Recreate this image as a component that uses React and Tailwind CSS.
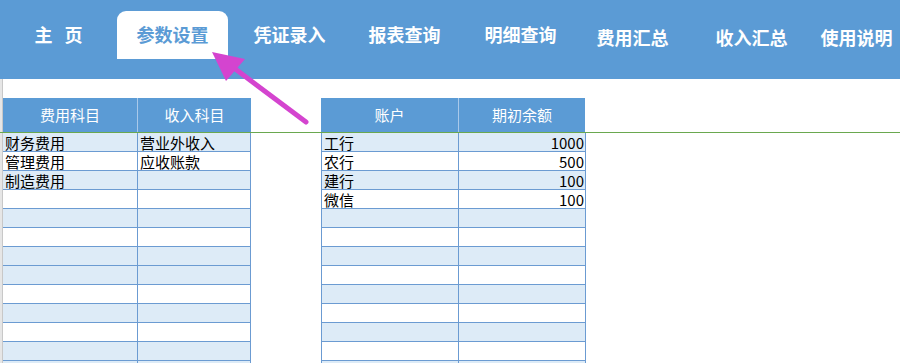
import React from 'react'

const font = { fontFamily: '"Noto Sans CJK SC", "Noto Sans", sans-serif' }

const navItems = [
  { label: '主页', width: 'w-[117px]', spaced: true },
  { label: '参数设置', width: 'w-[111px]', active: true },
  { label: '凭证录入', width: 'w-[123px]' },
  { label: '报表查询', width: 'w-[107px]' },
  { label: '明细查询', width: 'w-[125px]' },
  { label: '费用汇总', width: 'w-[99px]', low: true },
  { label: '收入汇总', width: 'w-[139px]', low: true },
  { label: '使用说明', width: 'w-[71px]', low: true },
]

const expenses = ['财务费用', '管理费用', '制造费用']
const incomes = ['营业外收入', '应收账款']
const accounts = [
  ['工行', '1000'],
  ['农行', '500'],
  ['建行', '100'],
  ['微信', '100'],
]

// left table has a doubled blue stripe lower down, as in the sheet
const leftStripes = [1, 0, 1, 0, 1, 0, 1, 1, 0, 1, 0, 1, 1]

function NavBar() {
  return (
    <div className="flex h-[79px] w-full items-start bg-[#5b9bd5] pt-[11px]">
      {navItems.map((item) => (
        <div
          key={item.label}
          className={
            item.active
              ? `${item.width} flex h-[48px] shrink-0 items-center justify-center rounded-t-[9px] bg-white pb-[2px] text-[18px] font-bold whitespace-nowrap text-[#5b9bd5]`
              : item.low
                ? `${item.width} flex h-[48px] shrink-0 items-center justify-center pt-[4px] text-[18px] font-bold whitespace-nowrap text-white`
                : `${item.width} flex h-[48px] shrink-0 items-center justify-center gap-[12px] pb-[2px] text-[18px] font-bold whitespace-nowrap text-white`
          }
        >
          {item.spaced ? (
            <>
              <span>主</span>
              <span>页</span>
            </>
          ) : (
            item.label
          )}
        </div>
      ))}
    </div>
  )
}

function HeaderRow() {
  return (
    <div className="flex h-[35px] border-b border-[#6aa84f]">
      <div className="w-[3px] shrink-0 border-r border-[#c8c8c8] bg-[#e6e6e6]" />
      <div className="flex w-[135px] shrink-0 items-center justify-center border-r border-[#a9c9ea] bg-[#5b9bd5] text-[15px] text-white">
        费用科目
      </div>
      <div className="flex w-[113px] shrink-0 items-center justify-center bg-[#5b9bd5] text-[15px] text-white">
        收入科目
      </div>
      <div className="w-[70px] shrink-0" />
      <div className="flex w-[138px] shrink-0 items-center justify-center border-r border-[#a9c9ea] bg-[#5b9bd5] text-[15px] text-white">
        账户
      </div>
      <div className="flex w-[126px] shrink-0 items-center justify-center bg-[#5b9bd5] text-[15px] text-white">
        期初余额
      </div>
      <div className="flex-1" />
    </div>
  )
}

function DataRow({ index }) {
  const leftBg = leftStripes[index] ? 'bg-[#ddebf7]' : 'bg-white'
  const rightBg = index % 2 === 0 ? 'bg-[#ddebf7]' : 'bg-white'
  const account = accounts[index]

  return (
    <div className="flex h-[19px] text-[15px] leading-[19px] text-black">
      <div className="w-[3px] shrink-0 border-r border-[#c8c8c8] bg-[#e6e6e6]" />
      <div className={`w-[135px] shrink-0 border-r border-b border-[#6b9bd2] pl-[2px] whitespace-nowrap ${leftBg}`}>
        {expenses[index] || ''}
      </div>
      <div className={`w-[113px] shrink-0 border-r border-b border-[#6b9bd2] pl-[2px] whitespace-nowrap ${leftBg}`}>
        {incomes[index] || ''}
      </div>
      <div className="w-[70px] shrink-0" />
      <div className={`w-[138px] shrink-0 border-x border-b border-[#6b9bd2] pl-[2px] whitespace-nowrap ${rightBg}`}>
        {account ? account[0] : ''}
      </div>
      <div className={`w-[127px] shrink-0 border-r border-b border-[#6b9bd2] pr-[1px] text-right whitespace-nowrap ${rightBg}`}>
        {account ? account[1] : ''}
      </div>
      <div className="flex-1" />
    </div>
  )
}

function Arrow() {
  return (
    <svg className="pointer-events-none absolute top-0 left-0" width="900" height="363" viewBox="0 0 900 363">
      <line x1="306" y1="122" x2="234" y2="68" stroke="#d444cf" strokeWidth="5" strokeLinecap="round" />
      <polygon points="212,52 245,59 226,81" fill="#d444cf" />
    </svg>
  )
}

export default function App() {
  return (
    <div className="relative h-[363px] w-[900px] overflow-hidden bg-white" style={font}>
      <NavBar />
      <div className="flex h-[19px]">
        <div className="w-[3px] shrink-0 border-r border-[#c8c8c8] bg-[#e6e6e6]" />
      </div>
      <HeaderRow />
      {leftStripes.map((_, i) => (
        <DataRow key={i} index={i} />
      ))}
      <Arrow />
    </div>
  )
}
